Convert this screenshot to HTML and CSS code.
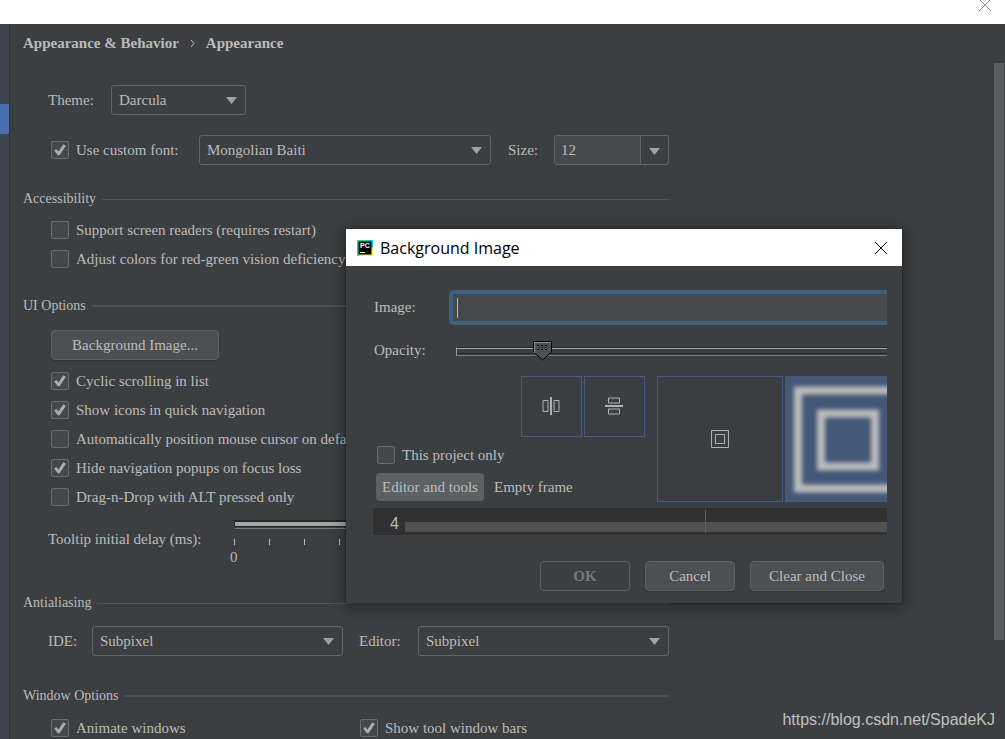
FILE: index.html
```html
<!DOCTYPE html>
<html lang="en">
<head>
<meta charset="utf-8">
<title>Settings – Appearance</title>
<link rel="stylesheet" href="styles.css">
</head>
<body>
<div class="window">
  <header class="window-bar">
    <button class="window-close" aria-label="Close settings"><svg width="12" height="12" viewBox="0 0 12 12"><path d="M0 0L12 12M12 0L0 12"/></svg></button>
  </header>
  <div class="window-body">
    <nav class="sidebar" aria-label="Settings sections"><a class="sidebar-item" href="#" aria-label="Appearance"></a></nav>
    <main class="page">
      <h1 class="crumbs"><span>Appearance &amp; Behavior</span><svg width="5" height="9" viewBox="0 0 5 9"><path d="M1 1l3 3.5L1 8"/></svg><span>Appearance</span></h1>
      <div class="settings">
        <div class="row row-theme">
          <label class="lbl-theme" for="theme">Theme:</label>
          <span class="select w-theme"><select id="theme"><option>Darcula</option></select></span>
        </div>
        <div class="row row-font">
          <label class="check font-check"><input type="checkbox" checked>Use custom font:</label>
          <span class="select w-font"><select aria-label="Font"><option>Mongolian Baiti</option></select></span>
          <label class="lbl-size" for="size">Size:</label>
          <span class="combo"><input id="size" type="text" value="12"><button aria-label="Choose size"></button></span>
        </div>

        <h2 class="section sec-access">Accessibility</h2>
        <div class="checks">
          <label class="check"><input type="checkbox">Support screen readers (requires restart)</label>
          <label class="check"><input type="checkbox">Adjust colors for red-green vision deficiency</label>
        </div>

        <h2 class="section thick sec-ui">UI Options</h2>
        <div class="checks">
          <button class="btn btn-image">Background Image...</button>
          <label class="check"><input type="checkbox" checked>Cyclic scrolling in list</label>
          <label class="check"><input type="checkbox" checked>Show icons in quick navigation</label>
          <label class="check"><input type="checkbox">Automatically position mouse cursor on default button</label>
          <label class="check"><input type="checkbox" checked>Hide navigation popups on focus loss</label>
          <label class="check"><input type="checkbox">Drag-n-Drop with ALT pressed only</label>
        </div>
        <div class="row row-delay">
          <label class="lbl-delay" for="delay">Tooltip initial delay (ms):</label>
          <div class="delay">
            <input class="slider filled" id="delay" type="range" min="0" max="1200" value="1200">
            <div class="ticks"></div>
            <span class="zero">0</span>
          </div>
        </div>

        <h2 class="section sec-anti">Antialiasing</h2>
        <div class="row row-anti">
          <label class="lbl-ide" for="ide">IDE:</label>
          <span class="select w-grow"><select id="ide"><option>Subpixel</option></select></span>
          <label class="lbl-editor" for="editor">Editor:</label>
          <span class="select w-grow"><select id="editor"><option>Subpixel</option></select></span>
        </div>

        <h2 class="section thick sec-win">Window Options</h2>
        <div class="checks pair">
          <label class="check"><input type="checkbox" checked>Animate windows</label>
          <label class="check"><input type="checkbox" checked>Show tool window bars</label>
        </div>
      </div>
      <div class="scrollbar"></div>
    </main>
  </div>

  <section class="dialog" role="dialog" aria-labelledby="dlg-title">
    <header class="dialog-bar">
      <svg class="logo" width="16" height="16" viewBox="0 0 16 16">
        <defs><linearGradient id="lg" x1="0" y1="0" x2="1" y2="1"><stop offset="0" stop-color="#21d789"/><stop offset=".5" stop-color="#2fd27c"/><stop offset=".62" stop-color="#fcf84a"/><stop offset="1" stop-color="#f6ee4e"/></linearGradient></defs>
        <rect width="16" height="16" fill="url(#lg)"/><path d="M11 0h5v8l-3-2z" fill="#07c3f2"/><rect x="1.500" y="1.500" width="13" height="13" fill="#000"/>
        <text class="logo-text" x="3" y="8">PC</text><path d="M3 12h5v1H3z" fill="#fff"/>
      </svg>
      <h2 id="dlg-title">Background Image</h2>
      <button class="dialog-close" aria-label="Close"><svg width="12" height="12" viewBox="0 0 12 12"><path d="M0 0L12 12M12 0L0 12"/></svg></button>
    </header>
    <div class="dialog-body">
      <div class="form">
        <label for="image">Image:</label>
        <span class="image-field"><input id="image" type="text"></span>
        <label for="opacity">Opacity:</label>
        <div class="opacity">
          <input class="slider" id="opacity" type="range" min="0" max="100" value="17">
          <svg class="thumb" width="19" height="20" viewBox="0 0 19 20"><path d="M.500.500H18.500V11L9.500 19 .500 11z" fill="#4c5052" stroke="#000"/><path d="M1.500 12V1.500H18" fill="none" stroke="#8a8d8f"/><path d="M4 4.500h2M8 4.500h2M12 4.500h2M6 6.500h1M9 6.500h1M12 6.500h1M4 8.500h2M8 8.500h2M12 8.500h2" stroke="#000"/></svg>
        </div>
      </div>
      <div class="options">
        <div class="options-left">
          <div class="flips">
            <button class="tile" aria-label="Flip horizontally"><svg width="18" height="18" viewBox="0 0 18 18"><path d="M8 0h2v18H8z" fill="#afb1b3"/><path d="M1 3.500h5v11H1zM12 3.500h5v11h-5z"/></svg></button>
            <button class="tile" aria-label="Flip vertically"><svg width="18" height="18" viewBox="0 0 18 18"><path d="M0 8h18v2H0z" fill="#afb1b3"/><path d="M3.500 1v5h11V1zM3.500 12v5h11v-5z"/></svg></button>
          </div>
          <label class="check"><input type="checkbox">This project only</label>
          <div class="tabs"><button class="tab active">Editor and tools</button><button class="tab">Empty frame</button></div>
        </div>
        <button class="place" aria-label="Center"><svg width="18" height="18" viewBox="0 0 18 18"><path d="M.500.500h17v17H.500zM4.500 4.500h9v9h-9z"/></svg></button>
        <button class="place scaled" aria-label="Scale"><svg width="126" height="126" viewBox="0 0 126 126"><path d="M13 14.500h100v98H13zM36 37.500h54v53H36z"/></svg></button>
      </div>
      <div class="preview"><span class="line-no">4</span><span class="line-bar"></span></div>
      <footer class="actions">
        <button class="btn btn-ok" disabled>OK</button>
        <button class="btn btn-cancel">Cancel</button>
        <button class="btn btn-clear">Clear and Close</button>
      </footer>
    </div>
  </section>
  <a class="watermark" href="#">https://blog.csdn.net/SpadeKJ</a>
</div>
</body>
</html>
```

FILE: styles.css
```css
* { box-sizing: border-box; }

body {
  margin: 0;
  color: #bbb;
  background: #3c3f41;
  font: 15px/20px "Liberation Serif", serif;
}

button, input, select {
  margin: 0;
  padding: 0;
  color: inherit;
  font: inherit;
  border: 0;
  background: none;
  outline: 0;
  appearance: none;
}

h1, h2 { margin: 0; font-size: inherit; font-weight: normal; }
svg { display: block; fill: none; }

.window {
  position: relative;
  display: flex;
  flex-direction: column;
  height: 100vh;
  overflow: hidden;
}

.window-bar {
  display: flex;
  justify-content: flex-end;
  flex: none;
  height: 24px;
  padding-right: 14px;
  background: #fff;
}
.window-close { align-self: flex-start; height: 11px; overflow: hidden; }
.window-close svg { margin-top: -1px; stroke: #8a8a8a; }

.window-body { display: flex; flex: 1; min-height: 0; }

.sidebar {
  flex: none;
  width: 10px;
  padding-top: 80px;
  background: #3f434c;
  border-right: 1px solid #323232;
}
.sidebar-item { display: block; height: 30px; background: #4b6eaf; }

.page {
  display: grid;
  grid-template: auto 1fr / 1fr 11px;
  flex: 1;
  min-width: 0;
  padding: 9px 0 0 13px;
}

.crumbs {
  display: flex;
  grid-column: 1 / 3;
  align-items: center;
  gap: 11px;
  height: 20px;
  font-weight: bold;
}
.crumbs svg { stroke: #bbb; }

.scrollbar {
  height: 577px;
  margin: 10px 1px 0 0;
  background: #595b5d;
}

.settings { max-width: 646px; padding-top: 32px; }

.row { display: flex; align-items: center; padding-left: 25px; white-space: nowrap; }
.row-font { margin-top: 20px; padding-left: 28px; }
.lbl-theme { flex: none; width: 63px; }
.font-check { flex: none; width: 148px; }
.lbl-size { flex: none; width: 63px; padding-left: 17px; }

.select {
  position: relative;
  display: block;
  min-width: 0;
}
.w-theme { width: 135px; }
.w-font, .w-grow { flex: 1; }
.select select {
  display: block;
  width: 100%;
  height: 30px;
  padding: 0 28px 0 7px;
  border: 1px solid #646464;
  border-radius: 3px;
}
.select::after, .combo button::after {
  content: "";
  position: absolute;
  top: 12px;
  right: 9px;
  width: 11px;
  height: 7px;
  background: #9da2a6;
  clip-path: polygon(0 0, 100% 0, 50% 100%);
  pointer-events: none;
}

.combo {
  display: flex;
  flex: none;
  width: 115px;
  height: 30px;
  border: 1px solid #646464;
  border-radius: 3px;
}
.combo input {
  flex: 1;
  min-width: 0;
  padding: 0 6px;
  background: #45494a;
  border-right: 1px solid #646464;
}
.combo button { position: relative; width: 27px; }
.combo button::after { right: 8px; }

.section {
  display: flex;
  align-items: center;
  gap: 6px;
  font-size: 14px;
}
.section::after { content: ""; flex: 1; height: 1px; background: #515455; }
.section.thick::after { height: 2px; background: #515151; }
.sec-access { margin-top: 24px; }
.sec-ui { margin-top: 27px; }
.sec-anti { margin-top: 26px; }
.sec-win { margin-top: 30px; }

.checks {
  display: flex;
  flex-direction: column;
  align-items: flex-start;
  gap: 9px;
  margin-top: 11px;
  padding-left: 28px;
}
.check { display: flex; align-items: center; gap: 7px; white-space: nowrap; }
.check input {
  position: relative;
  flex: none;
  width: 18px;
  height: 18px;
  background: #43494a;
  border: 1px solid #6b6b6b;
  border-radius: 2px;
}
.check input:checked::after {
  content: "";
  position: absolute;
  inset: 1px;
  background: #a9adae;
  clip-path: polygon(9% 54%, 24% 42%, 39% 60%, 74% 9%, 92% 20%, 47% 88%, 34% 88%);
}

.btn {
  height: 30px;
  padding: 0 17px;
  background: #4c5052;
  border: 1px solid #5e6060;
  border-radius: 4px;
  box-shadow: 0 1px 1px #00000030;
}
.sec-ui + .checks { margin-top: 14px; }
.btn-image { min-width: 168px; margin-bottom: 2px; }

.row-delay { align-items: flex-start; margin-top: 13px; }
.lbl-delay { flex: none; width: 186px; padding-top: 9px; }
.delay { flex: 1; }

.slider {
  display: block;
  width: 100%;
  height: 9px;
  border-top: 1px solid #252829;
  border-left: 1px solid #9a9a9a;
  border-bottom: 1px solid #777a7c;
  background: linear-gradient(#a5a5a5 0 1px, #3c3f41 1px 5px, #252829 5px 6px, #3c3f41 6px);
}
.slider.filled {
  border-left-color: #252829;
  background: linear-gradient(#252829 0 1px, #a5a5a5 1px 5px, #252829 5px 6px, #3c3f41 6px);
}
.slider::-webkit-slider-thumb { appearance: none; width: 1px; height: 1px; }
.ticks {
  height: 6px;
  margin-top: 10px;
  background: repeating-linear-gradient(90deg, #bbb 0 1px, transparent 1px 35px);
}
.zero { display: block; width: 1px; margin-top: 2px; text-indent: -4px; }

.row-anti { margin-top: 13px; }
.lbl-ide { width: 44px; }
.lbl-editor { width: 75px; padding-left: 16px; }
.pair { display: grid; grid-template-columns: 1fr 1fr; gap: 0; margin-top: 12px; }

.dialog {
  position: absolute;
  top: 229px;
  left: 346px;
  width: 556px;
  background: #3c3f41;
  box-shadow: 0 2px 16px 2px #00000060, 0 0 2px #00000080;
}
.dialog-bar {
  display: flex;
  align-items: center;
  gap: 7px;
  height: 37px;
  padding: 0 15px 0 11px;
  color: #000;
  background: #fff;
}
.logo-text { fill: #fff; font: bold 7px "Liberation Sans", sans-serif; }
.dialog-bar h2 { flex: 1; font: 16px/24px "Open Sans", "Noto Sans", sans-serif; }
.dialog-close svg { stroke: #000; }

.dialog-body { padding: 24px 15px 12px 27px; }
.form {
  display: grid;
  grid-template-columns: 76px 1fr;
  align-items: center;
  row-gap: 16px;
}
.form label { padding: 0 0 2px 1px; line-height: 18px; }
.image-field {
  display: flex;
  align-items: center;
  height: 35px;
  padding-left: 4px;
  background: #45494a;
  border: 4px solid #3d6185;
  border-right: 0;
  border-radius: 5px 0 0 5px;
}
.image-field::before { content: ""; width: 1px; height: 20px; background: #bbb; }
.image-field input { flex: 1; }
.opacity { position: relative; height: 20px; padding: 6px 0 0 7px; }
.thumb { position: absolute; top: 0; left: 84px; }

.options { display: flex; gap: 2px; overflow: hidden; margin-top: 15px; }
.options-left { flex: 1; }
.flips { display: flex; justify-content: flex-end; gap: 2px; padding-right: 10px; }
.tile, .place {
  display: grid;
  place-items: center;
  flex: none;
  width: 61px;
  height: 61px;
  border: 1px solid #455a86;
}
.tile svg, .place svg { stroke: #afb1b3; }
.tile svg { margin: 0 2px 1px 0; }
.tile path[fill] { stroke: none; }
.options-left .check { margin: 8px 0 0 4px; }
.tabs { display: flex; gap: 5px; margin: 8px 0 0 3px; white-space: nowrap; }
.tab { height: 28px; padding: 0 5px; border-radius: 4px; }
.tab.active { min-width: 108px; background: #5c6164; }
.place { width: 126px; height: 126px; }
.place.scaled { place-items: start; width: 102px; overflow: hidden; border: 0; background: #455878; }
.place.scaled svg { stroke: #bbb; stroke-width: 8; filter: blur(2px); }

.preview {
  position: relative;
  display: flex;
  align-items: center;
  height: 27px;
  margin-top: 6px;
  background: #313131;
}
.preview::after {
  content: "";
  position: absolute;
  left: 332px;
  top: 2px;
  width: 1px;
  height: 23px;
  background: #626262;
}
.line-no { width: 32px; padding-left: 17px; padding-top: 4px; font: 16px/20px "Liberation Sans", sans-serif; }
.line-bar { flex: 1; height: 10px; margin-top: 11px; background: #515151; }

.actions { display: flex; justify-content: flex-end; gap: 15px; margin-top: 26px; padding-right: 3px; }
.btn-ok { width: 90px; color: #777; font-weight: bold; background: none; box-shadow: none; }
.btn-cancel { width: 90px; }
.btn-clear { min-width: 134px; }

.watermark {
  position: absolute;
  right: 10px;
  bottom: 9px;
  color: #c0c0c0;
  font: 16px/20px "Liberation Sans", sans-serif;
  text-decoration: none;
}
```
